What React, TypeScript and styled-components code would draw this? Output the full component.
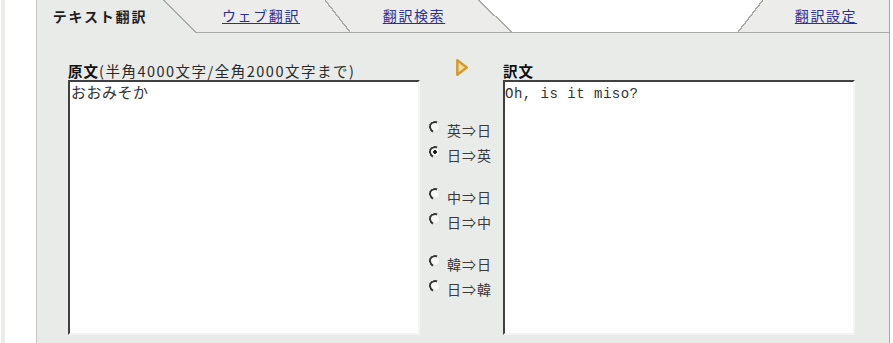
import React from 'react';
import styled, { createGlobalStyle } from 'styled-components';

const PANEL = '#e9ebe8';
const TAB_BG = '#ecedeb';
const LINE = '#a9aaa8';

const GlobalStyle = createGlobalStyle`
  html, body {
    margin: 0;
    padding: 0;
    background: #fff;
  }
  body {
    font-family: "Noto Sans CJK JP", "Noto Sans", sans-serif;
  }
`;

const Page = styled.div`
  display: flex;
  width: 893px;
  height: 343px;
  overflow: hidden;
`;

const Rail = styled.div`
  width: 4px;
  margin-left: 1px;
  margin-right: 31px;
  background: #ebecea;
`;

const Main = styled.div`
  width: 854px;
  display: flex;
  flex-direction: column;
`;

const TabBar = styled.div`
  display: flex;
  height: 33px;
`;

const TabShell = styled.div<{ $active?: boolean }>`
  display: flex;
  box-sizing: border-box;
  height: 33px;
  border-bottom: ${(p) => (p.$active ? 'none' : `1px solid ${LINE}`)};
`;

const TabFace = styled.div<{ $w: number; $active?: boolean; $side?: 'left' | 'right' }>`
  box-sizing: border-box;
  width: ${(p) => p.$w}px;
  display: flex;
  align-items: center;
  justify-content: center;
  background: ${(p) => (p.$active ? PANEL : TAB_BG)};
  border-left: ${(p) => (p.$side === 'left' ? '1px solid #c6c7c5' : 'none')};
  border-right: ${(p) => (p.$side === 'right' ? `1px solid ${LINE}` : 'none')};
  padding-bottom: 2px;
`;

// diagonal edge of a tab: $down draws top-left -> bottom-right, otherwise top-right -> bottom-left
const TabCorner = styled.div<{ $w: number; $down?: boolean; $fill: string; $back: string }>`
  width: ${(p) => p.$w}px;
  background: linear-gradient(
    ${(p) => (p.$down ? 'to top right' : 'to top left')},
    ${(p) => p.$fill} calc(50% - 0.7px),
    ${LINE} calc(50% - 0.7px),
    ${LINE} calc(50% + 0.7px),
    ${(p) => p.$back} calc(50% + 0.7px)
  );
`;

const TabGap = styled.div`
  flex: 1;
  box-sizing: border-box;
  border-bottom: 1px solid ${LINE};
  background: #fff;
`;

const TabTitle = styled.span`
  font-size: 14px;
  font-weight: 700;
  letter-spacing: 1.8px;
  color: #1e1e1e;
`;

const TabLink = styled.a`
  font-size: 14px;
  letter-spacing: 1.6px;
  color: #2d2f96;
  text-decoration: underline;
  text-underline-offset: 2px;
  cursor: pointer;
`;

const Content = styled.div`
  display: grid;
  grid-template-columns: 352px 83px 352px;
  grid-template-rows: 19px 255px;
  padding: 28px 34px 10px 31px;
  background: ${PANEL};
  border-left: 1px solid #c6c7c5;
  border-right: 1px solid ${LINE};
`;

const FieldLabel = styled.div`
  font-size: 14.5px;
  line-height: 19px;
  letter-spacing: 1.5px;
  color: #2a2a2a;
  white-space: nowrap;

  b {
    color: #111;
    letter-spacing: 1px;
  }
`;

const PlayMark = styled.div`
  display: flex;
  justify-content: center;
  align-items: center;

  svg {
    transform: translateY(-3px);
  }
`;

const TextBox = styled.textarea<{ $mono?: boolean }>`
  box-sizing: border-box;
  display: block;
  width: 100%;
  height: 255px;
  margin: 0;
  padding: ${(p) => (p.$mono ? '3px 0' : '1px 1px')};
  border: 2px solid;
  border-color: #404040 #f4f4f4 #f4f4f4 #404040;
  background: #fff;
  resize: none;
  outline: none;
  color: #333;
  font-family: ${(p) =>
    p.$mono
      ? '"Liberation Mono", "Noto Sans CJK JP", monospace'
      : '"Noto Sans CJK JP", sans-serif'};
  font-size: ${(p) => (p.$mono ? '14px' : '15px')};
  letter-spacing: 0.5px;
  line-height: 18px;
`;

const ModeColumn = styled.div`
  display: flex;
  flex-direction: column;
  gap: 17px;
  padding: 37px 0 0 9px;
`;

const ModeGroup = styled.div`
  display: flex;
  flex-direction: column;
`;

const ModeOption = styled.label`
  display: flex;
  align-items: center;
  gap: 6px;
  height: 25px;
  font-size: 14px;
  letter-spacing: 1px;
  color: #3a3a3a;
  white-space: nowrap;
`;

const Radio = styled.input`
  appearance: none;
  box-sizing: border-box;
  width: 12px;
  height: 12px;
  margin: 0;
  border-radius: 50%;
  border: 2px solid;
  border-color: #333 #e6e7e5 #e6e7e5 #333;
  background: #f7f7f6;
  transform: translateY(-3px) rotate(-20deg);

  &:checked {
    background: radial-gradient(circle, #222 0 1.6px, #f7f7f6 2.1px);
  }
`;

const modes = [
  ['英⇒日', '日⇒英'],
  ['中⇒日', '日⇒中'],
  ['韓⇒日', '日⇒韓'],
];

export default function App() {
  return (
    <>
      <GlobalStyle />
      <Page>
        <Rail />
        <Main>
          <TabBar>
            <TabShell $active>
              <TabFace $w={127} $active $side="left">
                <TabTitle>テキスト翻訳</TabTitle>
              </TabFace>
              <TabCorner $w={34} $down $fill={PANEL} $back={TAB_BG} />
            </TabShell>
            <TabShell>
              <TabFace $w={128}>
                <TabLink>ウェブ翻訳</TabLink>
              </TabFace>
              <TabCorner $w={25} $down $fill={TAB_BG} $back={TAB_BG} />
            </TabShell>
            <TabShell>
              <TabFace $w={128}>
                <TabLink>翻訳検索</TabLink>
              </TabFace>
              <TabCorner $w={34} $down $fill={TAB_BG} $back="#fff" />
            </TabShell>
            <TabGap />
            <TabShell>
              <TabCorner $w={25} $fill={TAB_BG} $back="#fff" />
              <TabFace $w={127} $side="right">
                <TabLink>翻訳設定</TabLink>
              </TabFace>
            </TabShell>
          </TabBar>

          <Content>
            <FieldLabel>
              <b>原文</b>(半角4000文字/全角2000文字まで)
            </FieldLabel>
            <PlayMark>
              <svg width="14" height="19" viewBox="0 0 14 19">
                <path
                  d="M2.3 2.3 L11.8 9.5 L2.3 16.7 Z"
                  fill="#f2dd9e"
                  stroke="#d39a2c"
                  strokeWidth="2.4"
                  strokeLinejoin="round"
                />
              </svg>
            </PlayMark>
            <FieldLabel>
              <b>訳文</b>
            </FieldLabel>

            <TextBox readOnly defaultValue="おおみそか" />
            <ModeColumn>
              {modes.map((group, gi) => (
                <ModeGroup key={gi}>
                  {group.map((m) => (
                    <ModeOption key={m}>
                      <Radio type="radio" name="direction" defaultChecked={m === '日⇒英'} />
                      {m}
                    </ModeOption>
                  ))}
                </ModeGroup>
              ))}
            </ModeColumn>
            <TextBox $mono readOnly defaultValue="Oh, is it miso?" />
          </Content>
        </Main>
      </Page>
    </>
  );
}
